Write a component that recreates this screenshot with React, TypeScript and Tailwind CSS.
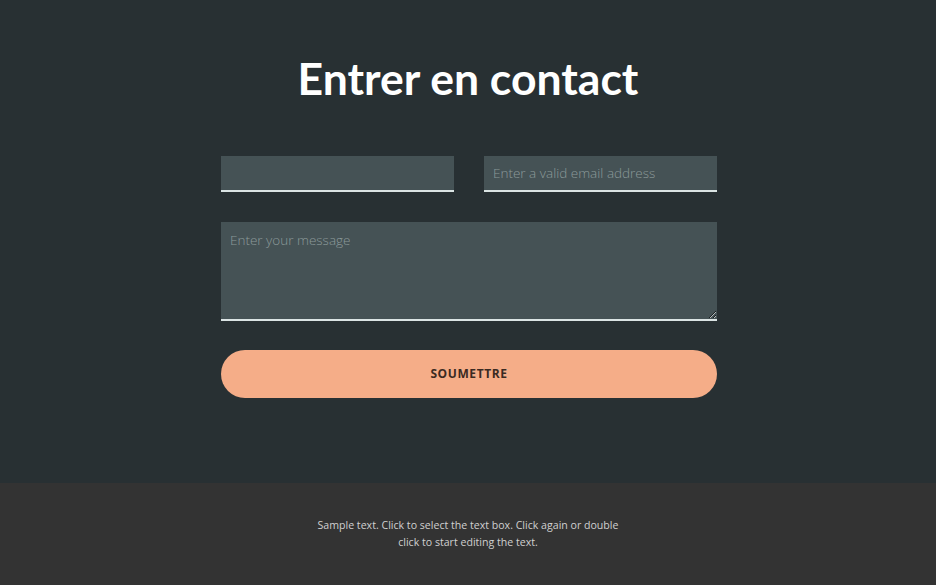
const ContactSection = () => {
  return (
    <div className="w-full min-h-[585px] flex flex-col font-['Open_Sans',sans-serif]">
      <section className="bg-[#283033] h-[483px] pt-[50px]">
        <h2 className="text-center text-white text-[44.5px] leading-[55px] font-bold font-['Lato',sans-serif]">
          Entrer en contact
        </h2>
        <div className="pl-[2px]">
          <form className="w-[496px] mx-auto mt-[51px] flex flex-col">
            <div className="grid grid-cols-2 gap-[30px]">
              <input
                type="text"
                className="h-[36px] bg-[#455255] border-b-2 border-[#dbe4e4] px-[9px] text-[13px] text-white outline-none"
              />
              <input
                type="email"
                placeholder="Enter a valid email address"
                className="h-[36px] bg-[#455255] border-b-2 border-[#dbe4e4] px-[9px] text-[13.5px] font-light text-white placeholder:text-[#8c9a9a] outline-none"
              />
            </div>
            <textarea
              placeholder="Enter your message"
              className="mt-[30px] h-[99px] bg-[#455255] border-b-2 border-[#dbe4e4] px-[9px] py-[8px] text-[13.5px] font-light text-white placeholder:text-[#8c9a9a] outline-none resize-y"
            />
            <button
              type="button"
              className="mt-[29px] h-[48px] rounded-full bg-[#f5ad88] text-[#3b2a22] text-[12px] font-bold tracking-[0.6px] uppercase"
            >
              Soumettre
            </button>
          </form>
        </div>
      </section>
      <footer className="bg-[#333333] flex-1 pt-[34px] pb-[30px]">
        <p className="w-[310px] mx-auto text-center text-[10.6px] leading-[16.5px] text-[#d0d0d0]">
          Sample text. Click to select the text box. Click again or double click to start editing the text.
        </p>
      </footer>
    </div>
  );
};

export default function App() {
  return <ContactSection />;
}
